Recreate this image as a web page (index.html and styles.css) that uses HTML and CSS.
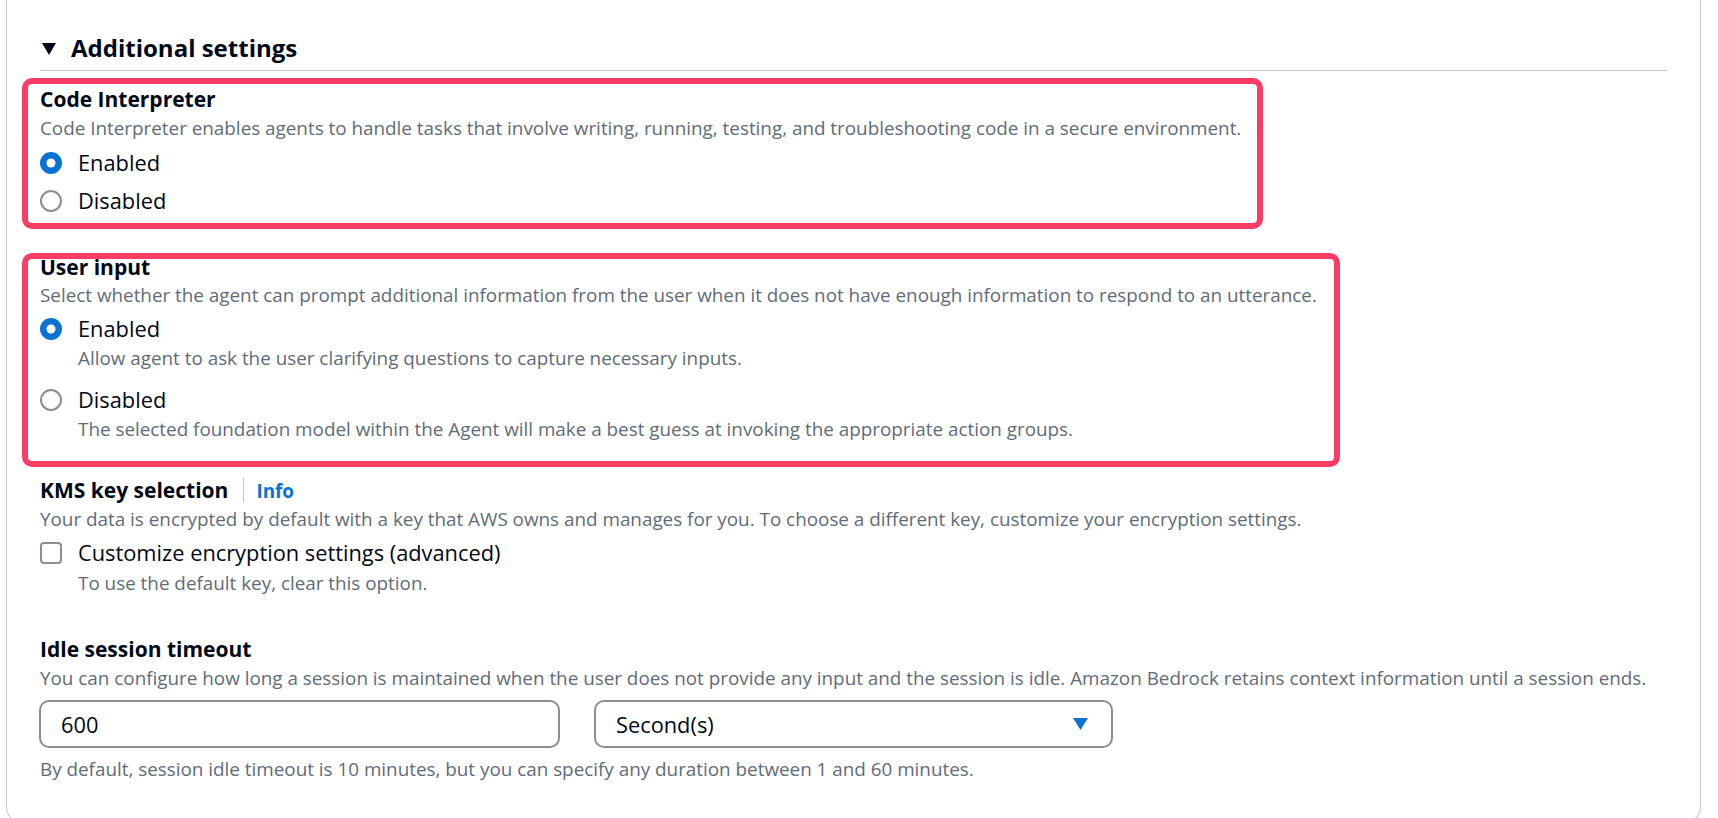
FILE: index.html
```html
<!DOCTYPE html>
<html lang="en">
<head>
<meta charset="utf-8">
<title>Additional settings</title>
<link rel="stylesheet" href="styles.css">
</head>
<body>
<div class="container">
  <div class="section-header">
    <svg class="caret" width="14" height="12" viewBox="0 0 14 12"><polygon points="0,0 14,0 7,12" fill="#000716"/></svg>
    <span class="section-title">Additional settings</span>
  </div>

  <div class="highlight highlight-code">
    <div class="field-label">Code Interpreter</div>
    <div class="field-desc">Code Interpreter enables agents to handle tasks that involve writing, running, testing, and troubleshooting code in a secure environment.</div>
    <div class="radio-group">
      <div class="radio-row">
        <svg class="radio" width="22" height="22" viewBox="0 0 22 22"><circle cx="11" cy="11" r="11" fill="#0972d3"/><circle cx="11" cy="11" r="4.5" fill="#fff"/></svg>
        <span class="radio-label">Enabled</span>
      </div>
      <div class="radio-row">
        <svg class="radio" width="22" height="22" viewBox="0 0 22 22"><circle cx="11" cy="11" r="10" fill="#fff" stroke="#8c8c94" stroke-width="2"/></svg>
        <span class="radio-label">Disabled</span>
      </div>
    </div>
  </div>

  <div class="highlight highlight-input">
    <div class="field-label tight">User input</div>
    <div class="field-desc spaced">Select whether the agent can prompt additional information from the user when it does not have enough information to respond to an utterance.</div>
    <div class="radio-group">
      <div class="option">
        <svg class="radio" width="22" height="22" viewBox="0 0 22 22"><circle cx="11" cy="11" r="11" fill="#0972d3"/><circle cx="11" cy="11" r="4.5" fill="#fff"/></svg>
        <div class="option-body">
          <div class="radio-label">Enabled</div>
          <div class="option-desc">Allow agent to ask the user clarifying questions to capture necessary inputs.</div>
        </div>
      </div>
      <div class="option option-second">
        <svg class="radio" width="22" height="22" viewBox="0 0 22 22"><circle cx="11" cy="11" r="10" fill="#fff" stroke="#8c8c94" stroke-width="2"/></svg>
        <div class="option-body">
          <div class="radio-label">Disabled</div>
          <div class="option-desc">The selected foundation model within the Agent will make a best guess at invoking the appropriate action groups.</div>
        </div>
      </div>
    </div>
  </div>

  <div class="field kms">
    <div class="label-row">
      <span class="field-label">KMS key selection</span>
      <span class="sep"></span>
      <a class="info">Info</a>
    </div>
    <div class="field-desc">Your data is encrypted by default with a key that AWS owns and manages for you. To choose a different key, customize your encryption settings.</div>
    <div class="option check-option">
      <span class="checkbox"></span>
      <div class="option-body">
        <div class="radio-label">Customize encryption settings (advanced)</div>
        <div class="option-desc sub">To use the default key, clear this option.</div>
      </div>
    </div>
  </div>

  <div class="field idle">
    <div class="field-label">Idle session timeout</div>
    <div class="field-desc">You can configure how long a session is maintained when the user does not provide any input and the session is idle. Amazon Bedrock retains context information until a session ends.</div>
    <div class="inputs">
      <div class="text-input">600</div>
      <div class="select">
        <span>Second(s)</span>
        <svg width="15" height="12" viewBox="0 0 15 12"><polygon points="0,0 15,0 7.5,12" fill="#0972d3"/></svg>
      </div>
    </div>
    <div class="field-desc footer">By default, session idle timeout is 10 minutes, but you can specify any duration between 1 and 60 minutes.</div>
  </div>
</div>
</body>
</html>
```
FILE: styles.css
```css
html, body {
  margin: 0;
  padding: 0;
  background: #ffffff;
  overflow: hidden;
  height: 818px;
}

body {
  font-family: "Open Sans", "Noto Sans", sans-serif;
  color: #000716;
}

.container {
  box-sizing: border-box;
  margin-left: 6px;
  width: 1695px;
  height: 823px;
  border: 1px solid #c6c6cd;
  border-top: none;
  border-radius: 0 0 16px 16px;
  padding: 33px 33px 0 33px;
}

.section-header {
  display: flex;
  align-items: center;
  gap: 15px;
  padding-left: 2px;
  padding-bottom: 7px;
  border-bottom: 1px solid #c6c6cd;
  height: 30px;
}

.caret {
  flex: none;
  margin-top: 1px;
}

.section-title {
  font-size: 24px;
  font-weight: 700;
  line-height: 30px;
}

.highlight {
  box-sizing: border-box;
  margin-left: -18px;
  border: 6px solid #fd3c65;
  border-radius: 10px;
  padding-left: 12px;
}

.highlight-code {
  width: 1241px;
  margin-top: 7px;
  padding-top: 2px;
  padding-bottom: 7px;
}

.highlight-input {
  width: 1318px;
  margin-top: 24px;
  padding-top: 0;
  padding-bottom: 20px;
}

.field-label {
  font-size: 21px;
  font-weight: 700;
  line-height: 26px;
}

.field-label.tight {
  line-height: 16px;
  margin-top: 0;
}

.field-desc {
  font-size: 18.85px;
  line-height: 24px;
  color: #5f6b7a;
  margin-top: 4px;
  white-space: nowrap;
}

.field-desc.spaced {
  margin-top: 8px;
}

.radio-group {
  display: flex;
  flex-direction: column;
  gap: 8px;
  margin-top: 8px;
}

.highlight-input .radio-group {
  margin-top: 7px;
  gap: 15px;
}

.radio-row {
  display: flex;
  align-items: center;
  gap: 16px;
  height: 30px;
}

.radio {
  flex: none;
}

.radio-label {
  font-size: 21.8px;
  line-height: 30px;
}

.option {
  display: flex;
  align-items: flex-start;
  gap: 16px;
}

.option > .radio,
.option > .checkbox {
  margin-top: 4px;
}

.option-desc {
  font-size: 18.85px;
  line-height: 24px;
  color: #5f6b7a;
  margin-top: 2px;
  white-space: nowrap;
}

.option-desc.sub {
  margin-top: 3px;
}

.kms {
  margin-top: 10px;
}

.label-row {
  display: flex;
  align-items: center;
  height: 26px;
}

.sep {
  width: 1px;
  height: 25px;
  background: #c6c6cd;
  margin: 0 12px 0 15px;
}

.info {
  font-size: 18.85px;
  font-weight: 700;
  color: #0972d3;
  line-height: 26px;
  margin-top: 1px;
}

.check-option {
  margin-top: 7px;
}

.checkbox {
  flex: none;
  box-sizing: border-box;
  width: 22px;
  height: 22px;
  border: 2px solid #8c8c94;
  border-radius: 4px;
  background: #fff;
}

.idle {
  margin-top: 41px;
}

.inputs {
  display: flex;
  gap: 34px;
  margin-top: 10px;
}

.text-input,
.select {
  box-sizing: border-box;
  height: 48px;
  border: 2px solid #8c8c94;
  border-radius: 10px;
  padding: 0 23px 0 20px;
  display: flex;
  align-items: center;
  font-size: 21.8px;
  color: #000716;
}

.text-input {
  width: 521px;
  margin-left: -1px;
}

.select {
  width: 519px;
  justify-content: space-between;
}

.field-desc.footer {
  margin-top: 9px;
}
```
